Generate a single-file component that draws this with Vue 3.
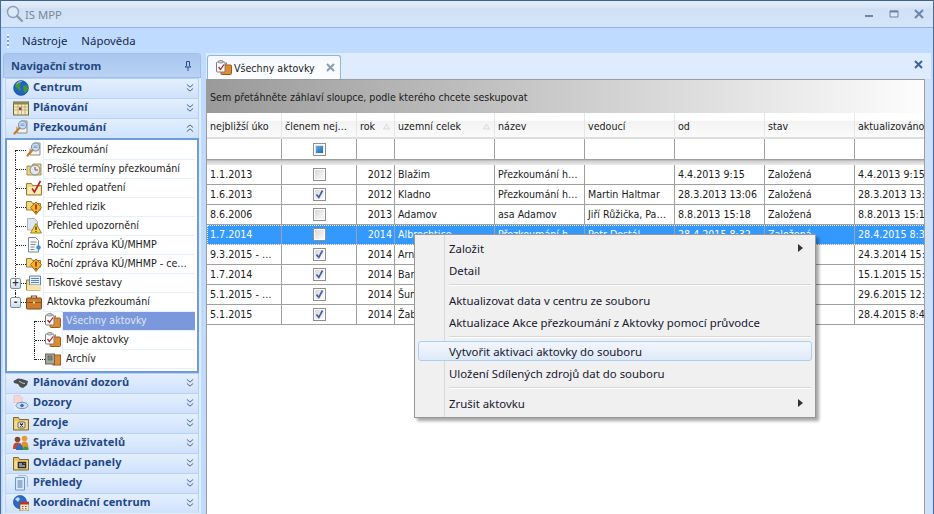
<script setup>
// section lists for the navigation panel
const topSections = [
  { label: 'Centrum', icon: 'globe' },
  { label: 'Plánování', icon: 'calendar' },
]
const bottomSections = [
  { label: 'Plánování dozorů', icon: 'hands' },
  { label: 'Dozory', icon: 'eyedoc' },
  { label: 'Zdroje', icon: 'folderx' },
  { label: 'Správa uživatelů', icon: 'users' },
  { label: 'Ovládací panely', icon: 'folderpanel' },
  { label: 'Přehledy', icon: 'doclist' },
  { label: 'Koordinační centrum', icon: 'globecal' },
]

const tree = [
  { label: 'Přezkoumání', icon: 'review', first: true },
  { label: 'Prošlé termíny přezkoumání', icon: 'overdue' },
  { label: 'Přehled opatření', icon: 'foldercheck' },
  { label: 'Přehled rizik', icon: 'folderwarn' },
  { label: 'Přehled upozornění', icon: 'docwarn' },
  { label: 'Roční zpráva KÚ/MHMP', icon: 'report' },
  { label: 'Roční zpráva KÚ/MHMP - ce…', icon: 'folderwarn' },
  { label: 'Tiskové sestavy', icon: 'folderdoc', expander: '+' },
  { label: 'Aktovka přezkoumání', icon: 'briefcase', expander: '-', last: true },
  { label: 'Všechny aktovky', icon: 'briefcheck', sub: true, selected: true, first: true },
  { label: 'Moje aktovky', icon: 'briefcheck', sub: true },
  { label: 'Archív', icon: 'archive', sub: true, last: true },
]

const columns = [
  { label: 'nejbližší úko' },
  { label: 'členem nej…' },
  { label: 'rok', sort: true },
  { label: 'uzemní celek', sort: true },
  { label: 'název' },
  { label: 'vedoucí' },
  { label: 'od' },
  { label: 'stav' },
  { label: 'aktualizováno' },
]

const rows = [
  { uko: '1.1.2013', member: false, year: 2012, area: 'Blažim', name: 'Přezkoumání h…', lead: '', from: '4.4.2013 9:15', state: 'Založená', updated: '4.4.2013 9:15' },
  { uko: '1.6.2013', member: true, year: 2012, area: 'Kladno', name: 'Přezkoumání h…', lead: 'Martin Haltmar', from: '28.3.2013 13:06', state: 'Založená', updated: '28.3.2013 13:06' },
  { uko: '8.6.2006', member: false, year: 2013, area: 'Adamov', name: 'asa Adamov', lead: 'Jiří Růžička, Pa…', from: '8.8.2013 15:18', state: 'Založená', updated: '8.8.2013 15:18' },
  { uko: '1.7.2014', member: false, year: 2014, area: 'Albrechtice', name: 'Přezkoumání h…', lead: 'Petr Dostál', from: '28.4.2015 8:32', state: 'Založená', updated: '28.4.2015 8:32', selected: true },
  { uko: '9.3.2015 - …', member: true, year: 2014, area: 'Arnoltice', name: '', lead: '', from: '', state: '', updated: '24.3.2014 15:10' },
  { uko: '1.7.2014', member: true, year: 2014, area: 'Bartošovice', name: '', lead: '', from: '', state: '', updated: '15.1.2015 15:12' },
  { uko: '5.1.2015 - …', member: true, year: 2014, area: 'Šumná', name: '', lead: '', from: '', state: '', updated: '29.6.2015 12:40' },
  { uko: '5.1.2015', member: true, year: 2014, area: 'Žabčice', name: '', lead: '', from: '', state: '', updated: '28.4.2015 8:40' },
]

const menuGroups = [
  [{ label: 'Založit', arrow: true }, { label: 'Detail' }],
  [{ label: 'Aktualizovat data v centru ze souboru' }, { label: 'Aktualizace Akce přezkoumání z Aktovky pomocí průvodce' }],
  [{ label: 'Vytvořit aktivaci aktovky do souboru', hover: true }, { label: 'Uložení Sdílených zdrojů dat do souboru' }],
  [{ label: 'Zrušit aktovku', arrow: true }],
]
</script>

<template>
  <svg class="sprite" aria-hidden="true">
    <symbol id="globe" viewBox="0 0 16 16">
      <circle cx="8" cy="8" r="7.4" fill="#1f63c4" stroke="#123f8a" stroke-width=".6" />
      <path d="M3 3.5 6.5 2 8 4 6.5 6.5 8 8.5 7 11 5 9 2 6.5zM10 6l4-1 1 4-2.5 4L10.500 11z" fill="#3f9a35" />
      <path d="M3.500 4a6 6 0 0 1 5-2.500" stroke="#bcdcff" fill="none" />
    </symbol>
    <symbol id="calendar" viewBox="0 0 16 16">
      <rect x=".5" y="2" width="15" height="13" fill="#f5e9bd" stroke="#6d6a3a" />
      <rect x=".5" y="2" width="15" height="2.500" fill="#8c8a4c" />
      <path d="M1 7h14M1 10h14M5 4v11M8.500 4v11M12 4v11" stroke="#a7a06a" stroke-width=".7" />
      <rect x="6" y="7.500" width="2.500" height="2.500" fill="#b02c4e" />
    </symbol>
    <symbol id="review" viewBox="0 0 16 16">
      <path d="M4 6.500V13h10V1H8" fill="#f6f3ea" stroke="#8b8b8b" />
      <circle cx="9.500" cy="5" r="4" fill="#c8def6" stroke="#7b93b5" stroke-width="1.100" />
      <path d="M7.500 4h4M7.500 5.500h4" stroke="#5f86bf" stroke-width=".7" />
      <path d="M6.500 8 1.500 13.500" stroke="#c77a2a" stroke-width="2.200" stroke-linecap="round" />
    </symbol>
    <symbol id="overdue" viewBox="0 0 16 16">
      <path d="M1 5h5l1-2h8v11H1z" fill="#efd47e" stroke="#97793a" stroke-width=".8" />
      <circle cx="9" cy="9" r="5" fill="#dfe9f0" stroke="#7c8a90" />
      <path d="M9 6v3h3" stroke="#b23b2b" fill="none" />
    </symbol>
    <symbol id="foldercheck" viewBox="0 0 16 16">
      <path d="M.5 3.500h5l1 2h9V15H.5z" fill="#f3d77f" stroke="#9a7c3a" />
      <path d="M1.500 7h13v7h-13z" fill="#fbeeb5" />
      <path d="M6 8.500l2.500 3.500L14.500 1" stroke="#b4212b" stroke-width="1.600" fill="none" />
    </symbol>
    <symbol id="folderwarn" viewBox="0 0 16 16">
      <path d="M.5 2.500h5l1 2h8V11H.5z" fill="#f3d77f" stroke="#9a7c3a" />
      <path d="M10 3 15.500 8.500 10 15.500 4.500 8.500z" fill="#f2b524" stroke="#a3691a" />
      <path d="M10 5.500v5M10 12v1.500" stroke="#a2211d" stroke-width="1.600" />
    </symbol>
    <symbol id="docwarn" viewBox="0 0 16 16">
      <path d="M1.500.5h7l3 3V12h-10z" fill="#dfe6ef" stroke="#a9b3c2" />
      <path d="M10 5.500 15.500 15h-11z" fill="#f5d23c" stroke="#9d8624" />
      <path d="M10 8.500v3.500M10 13v1" stroke="#222" stroke-width="1.200" />
    </symbol>
    <symbol id="report" viewBox="0 0 16 16">
      <path d="M2.500.5h7l3 3V15h-10z" fill="#f7f8fa" stroke="#7e8792" />
      <path d="M4.500 5h6M4.500 7.500h5M4.500 10h4M4.500 12.500h4" stroke="#7e8792" />
      <circle cx="12.500" cy="10.500" r="2.200" fill="#3a8fdc" />
    </symbol>
    <symbol id="folderdoc" viewBox="0 0 16 16">
      <path d="M.5 5h14v10H.5z" fill="#f0d585" stroke="#9a7c3a" />
      <path d="M3.500 1h11v9h-11z" fill="#e7f0fb" stroke="#5d84bc" />
      <path d="M5 3.500h8M5 5.500h8M5 7.500h8" stroke="#5d84bc" />
      <path d="M1 10h14v5H1z" fill="#f7e3a4" />
    </symbol>
    <symbol id="briefcase" viewBox="0 0 16 16">
      <path d="M5.500 4V2h5v2" fill="none" stroke="#7b4a1b" stroke-width="1.200" />
      <rect x=".5" y="4" width="15" height="11" rx="1" fill="#cf7d2e" stroke="#7b4a1b" />
      <path d="M1 8.500h14" stroke="#8b531e" />
      <rect x="7" y="7.500" width="2" height="2" fill="#f3d98b" />
    </symbol>
    <symbol id="briefcheck" viewBox="0 0 16 16">
      <rect x="5" y="5" width="10.500" height="9.500" rx="1" fill="#dc8d33" stroke="#9a5c1c" />
      <path d="M11 3h-1v2" stroke="#9a5c1c" fill="none" />
      <rect x=".5" y="2" width="8.500" height="10" rx="1" fill="#fff" stroke="#7b7b7b" />
      <rect x="2.500" y=".5" width="4.500" height="2.500" rx="1" fill="#c9c9c9" stroke="#7b7b7b" stroke-width=".7" />
      <path d="M2.500 7l2 2.500L8 4.500" stroke="#b4212b" stroke-width="1.300" fill="none" />
    </symbol>
    <symbol id="archive" viewBox="0 0 16 16">
      <rect x="8" y="4" width="7.500" height="10" fill="#dc8d33" stroke="#9a5c1c" />
      <rect x=".5" y="3" width="9" height="10" fill="#a9a9a0" stroke="#666" />
      <rect x="3" y="5" width="4" height="4" fill="#7c8f6a" stroke="#555" stroke-width=".6" />
    </symbol>
    <symbol id="hands" viewBox="0 0 16 16">
      <path d="M.5 6 5 3.500 9 4l6 2-1 4-4 3-3-1-2-3-4-1z" fill="#4c4f50" />
      <path d="M6 6l3 2 3 .5" stroke="#c5c7c8" fill="none" />
    </symbol>
    <symbol id="eyedoc" viewBox="0 0 16 16">
      <path d="M1 .5h6l2 2V8H1z" fill="#f6d5d2" stroke="#d8b9c8" stroke-width=".6" />
      <path d="M1 8V15h14V8z" fill="#e6eefb" />
      <ellipse cx="9" cy="10.500" rx="6" ry="3.200" fill="#cfe0f6" stroke="#6f93c6" />
      <circle cx="9" cy="10.500" r="1.800" fill="#3d6fb2" />
    </symbol>
    <symbol id="folderx" viewBox="0 0 16 16">
      <path d="M.5 2.500h5l1 2h9V15H.5z" fill="#e7c45f" stroke="#7f6a2d" />
      <path d="M1.500 6h13v8h-13z" fill="#f4dd8f" />
      <rect x="5" y="7" width="7" height="6" rx="1" fill="#efefe8" stroke="#444" stroke-width=".8" />
      <path d="M7 8.500l3 3M10 8.500l-3 3" stroke="#222" stroke-width="1.100" />
    </symbol>
    <symbol id="users" viewBox="0 0 16 16">
      <circle cx="4.500" cy="4.500" r="2.800" fill="#7d4a2a" />
      <circle cx="11.500" cy="3.500" r="2.800" fill="#e79a3a" />
      <path d="M0 14c0-6 2-6.500 4.500-6.500S9 8 9 14z" fill="#c8452b" />
      <path d="M8 14c0-7 1.500-7.500 3.500-7.500s4 .5 4 7.500z" fill="#e78e2c" />
      <path d="M3 15c0-5 1.500-5.500 3.500-5.500S10 10 10 15z" fill="#2d6cb8" />
      <path d="M10 15c0-3 1-3.500 2.500-3.500s3 .5 3 3.500z" fill="#3c9a3b" />
    </symbol>
    <symbol id="folderpanel" viewBox="0 0 16 16">
      <path d="M.5 2.500h5l1 2h9V15H.5z" fill="#e7c45f" stroke="#7f6a2d" />
      <path d="M1.500 6h13v8h-13z" fill="#f4dd8f" />
      <rect x="5" y="7" width="8" height="6" fill="#30343a" stroke="#222" stroke-width=".6" />
      <path d="M6 9h3M6 11h6" stroke="#e9e9e9" />
      <path d="M10.500 8.500h2" stroke="#d83b30" />
    </symbol>
    <symbol id="doclist" viewBox="0 0 16 16">
      <path d="M2.500 2.500h9V15h-9z" fill="#dbe9fa" stroke="#6f94c6" />
      <path d="M5 .5h8l1.500 1.500V12" fill="none" stroke="#9db9de" />
      <path d="M4.500 6h5M4.500 8h5M4.500 10h5M4.500 12h5" stroke="#4d79b5" />
    </symbol>
    <symbol id="globecal" viewBox="0 0 16 16">
      <circle cx="7" cy="7" r="6.600" fill="#2e69c7" stroke="#1d4a94" stroke-width=".6" />
      <path d="M2 4l3-2 2 2-2 3z" fill="#bcdcff" />
      <rect x="7" y="7" width="9" height="9" fill="#f6e7c8" stroke="#7c5a2b" stroke-width=".7" />
      <rect x="7" y="7" width="9" height="2.500" fill="#bd3328" />
      <path d="M9 11.500h1.500M12 11.500h1.500M9 13.800h1.500M12 13.800h1.500" stroke="#7c5a2b" />
    </symbol>
  </svg>

  <div class="window">
    <header class="titlebar">
      <svg class="app-icon" viewBox="0 0 18 18">
        <circle cx="7" cy="7" r="5.500" fill="#dceaf8" stroke="#8a9fb8" stroke-width="1.400" />
        <path d="M11 11l5 5" stroke="#8d9aa8" stroke-width="2.400" stroke-linecap="round" />
      </svg>
      <span class="app-title">IS MPP</span>
      <div class="win-buttons">
        <svg viewBox="0 0 12 12"><path d="M2 8h8" stroke="#6b86a8" stroke-width="2" /></svg>
        <svg viewBox="0 0 12 12"><path d="M2 3h8v6H2z" fill="#dbe8f8" stroke="#6b86a8" /><path d="M2 3.500h8" stroke="#6b86a8" stroke-width="2" /></svg>
        <svg viewBox="0 0 12 12"><path d="M2 2l8 8M10 2l-8 8" stroke="#6b86a8" stroke-width="2" /></svg>
      </div>
    </header>

    <nav class="menubar">
      <span class="grip"></span>
      <span class="menu-item">Nástroje</span>
      <span class="menu-item">Nápověda</span>
    </nav>

    <div class="workspace">
      <aside class="nav-panel">
        <div class="nav-head">
          <span>Navigační strom</span>
          <svg class="pin" viewBox="0 0 10 12"><path d="M3.500 1.500h3v4.500l1.500 1H2l1.500-1zM5 7v4" fill="none" stroke="#2b4f8a" /></svg>
        </div>
        <div class="sections">
          <div v-for="s in topSections" :key="s.label" class="section">
            <svg class="sec-icon"><use :href="'#' + s.icon" /></svg>
            <span class="sec-label">{{ s.label }}</span>
            <svg class="chev" viewBox="0 0 9 10"><path d="M1 1l3.500 3L8 1M1 5.500l3.500 3 3.500-3" fill="none" stroke="#44628c" stroke-width="1.100" /></svg>
          </div>
          <div class="section">
            <svg class="sec-icon"><use href="#review" /></svg>
            <span class="sec-label">Přezkoumání</span>
            <svg class="chev" viewBox="0 0 9 10"><path d="M1 4.500L4.500 1.500 8 4.500M1 9l3.500-3L8 9" fill="none" stroke="#44628c" stroke-width="1.100" /></svg>
          </div>
          <div class="tree">
            <div v-for="item in tree" :key="item.label" class="tree-row" :class="{ 'is-sub': item.sub }">
              <span class="conn" :class="{ 'conn-first': item.first, 'conn-last': item.last }">
                <span v-if="item.expander" class="expander">{{ item.expander }}</span>
              </span>
              <svg class="tree-icon"><use :href="'#' + item.icon" /></svg>
              <span class="tree-label" :class="{ selected: item.selected }">{{ item.label }}</span>
            </div>
          </div>
          <div v-for="s in bottomSections" :key="s.label" class="section">
            <svg class="sec-icon"><use :href="'#' + s.icon" /></svg>
            <span class="sec-label">{{ s.label }}</span>
            <svg class="chev" viewBox="0 0 9 10"><path d="M1 1l3.500 3L8 1M1 5.500l3.500 3 3.500-3" fill="none" stroke="#44628c" stroke-width="1.100" /></svg>
          </div>
        </div>
      </aside>

      <main class="content">
        <div class="tabstrip">
          <div class="tab">
            <svg class="tab-icon"><use href="#briefcheck" /></svg>
            <span>Všechny aktovky</span>
            <svg class="tab-close" viewBox="0 0 9 9"><path d="M1 1l7 7M8 1L1 8" stroke="#8c9ab0" stroke-width="2" /></svg>
          </div>
          <svg class="strip-close" viewBox="0 0 9 9"><path d="M1 1l7 7M8 1L1 8" stroke="#3f669c" stroke-width="2" /></svg>
        </div>

        <div class="grid-frame">
          <div class="grid">
            <div class="group-panel">Sem přetáhněte záhlaví sloupce, podle kterého chcete seskupovat</div>
            <div class="grid-row head-row">
              <div v-for="c in columns" :key="c.label" class="head-cell">
                <span>{{ c.label }}</span>
                <svg v-if="c.sort" class="sort" viewBox="0 0 7 7"><path d="M3.500 1 6.500 6h-6z" fill="#f2f2f2" stroke="#c9c9c9" stroke-width=".6" /></svg>
              </div>
            </div>
            <div class="grid-row filter-row">
              <div v-for="(c, i) in columns" :key="c.label" class="cell center">
                <span v-if="i === 1" class="check filter-check"><i></i></span>
              </div>
            </div>
            <div class="separator"></div>
            <div v-for="r in rows" :key="r.uko + r.area" class="grid-row data-row" :class="{ selected: r.selected }">
              <div class="cell">{{ r.uko }}</div>
              <div class="cell center">
                <span class="check">
                  <svg v-if="r.member" viewBox="0 0 11 11"><path d="M2.500 5.500l2.300 3L8.500 1.500" fill="none" stroke="#4a63a8" stroke-width="1.700" /></svg>
                </span>
              </div>
              <div class="cell right">{{ r.year }}</div>
              <div class="cell">{{ r.area }}</div>
              <div class="cell">{{ r.name }}</div>
              <div class="cell">{{ r.lead }}</div>
              <div class="cell">{{ r.from }}</div>
              <div class="cell">{{ r.state }}</div>
              <div class="cell">{{ r.updated }}</div>
            </div>
          </div>
        </div>
      </main>
    </div>

    <div class="context-menu">
      <template v-for="(group, g) in menuGroups" :key="g">
        <div v-if="g > 0" class="menu-sep"></div>
        <div v-for="m in group" :key="m.label" class="ctx-item" :class="{ hover: m.hover }">
          <span>{{ m.label }}</span>
          <svg v-if="m.arrow" class="ctx-arrow" viewBox="0 0 5 8"><path d="M0 0l5 4-5 4z" fill="#333" /></svg>
        </div>
      </template>
    </div>
  </div>
</template>

<style>
html, body { margin: 0; background: #bfdbff; }
</style>

<style scoped>
.sprite { display: none; }

.window {
  position: relative;
  width: 934px;
  height: 514px;
  box-sizing: border-box;
  overflow: hidden;
  background: #bfdbff;
  border-left: 1px solid #4a6d9c;
  border-right: 1px solid #4a6d9c;
  font-family: "DejaVu Sans Condensed", "Noto Sans", sans-serif;
  font-size: 10.600px;
  color: #1b1b1b;
}

.titlebar {
  height: 28px;
  box-sizing: border-box;
  border-top: 1px solid #3e6189;
  display: flex;
  align-items: center;
  padding: 0 8px 0 5px;
  background: linear-gradient(#e3eefc 0, #d8e6f8 25%, #cfe0f5 30%, #d6e5f8 100%);
  border-bottom: 1px solid #8db6e6;
}
.app-icon { width: 18px; height: 18px; margin-right: 1px; margin-top: -1px; }
.app-title { font-family: "Noto Sans", sans-serif; font-size: 11.300px; color: #7a8697; }
.win-buttons { margin-left: auto; display: flex; gap: 13px; }
.win-buttons svg { width: 12px; height: 12px; }

.menubar {
  height: 25px;
  display: flex;
  align-items: center;
  padding-left: 6px;
  background: #bfdbff;
  box-sizing: border-box;
  font-family: "Noto Sans", sans-serif;
}
.grip {
  width: 2px;
  height: 14px;
  margin-right: 13px;
  background: repeating-linear-gradient(#fff 0 2px, #5f8ac4 2px 4px);
  opacity: .7;
}
.menu-item { font-size: 11.400px; margin-right: 14px; color: #15294a; }

.workspace {
  display: flex;
  height: 461px;
}

.nav-panel {
  width: 198px;
  margin: 0 0 0 2px;
  flex: none;
  border-radius: 3px 3px 0 0;
  background: #e1edfd;
  overflow: hidden;
}
.nav-head {
  height: 25px;
  box-sizing: border-box;
  display: flex;
  align-items: center;
  justify-content: space-between;
  padding: 0 7px 0 7px;
  background: linear-gradient(#a9c6ee, #b9d2f4);
  border: 1px solid #a0c0ea;
  font-family: "Noto Sans", sans-serif;
  font-size: 11px;
  font-weight: 700;
  color: #21487f;
}
.pin { width: 10px; height: 12px; }

.sections {
  margin: 0 2px;
  background: #a9c9f2;
}
.section {
  height: 20px;
  box-sizing: border-box;
  display: flex;
  align-items: center;
  padding: 0 5px 1px 7px;
  background: linear-gradient(#e4effe, #cfe2fc);
  border: 1px solid #b6d2f8;
  border-width: 1px 1px 0 1px;
}
.sec-icon { width: 16px; height: 16px; margin-right: 4px; flex: none; }
.sec-label {
  font-family: "Noto Sans", sans-serif;
  font-size: 11px;
  line-height: 14px;
  margin-top: -2px;
  font-weight: 700;
  color: #1f4787;
  letter-spacing: .1px;
}
.chev { width: 8px; height: 10px; margin-left: auto; margin-right: -1px; }

.tree {
  background: #fff;
  border: 2px solid #6e9cdb;
  padding: 1px 0 3px;
  height: 235px;
  box-sizing: border-box;
}
.tree-row {
  display: flex;
  height: 19px;
  padding-left: 4px;
  align-items: stretch;
}
.tree-row.is-sub { padding-left: 23px; }

.conn {
  position: relative;
  width: 15px;
  flex: none;
}
.conn::before {
  content: "";
  position: absolute;
  left: 4px;
  top: 0;
  bottom: 0;
  border-left: 1px dotted #222;
}
.conn::after {
  content: "";
  position: absolute;
  left: 5px;
  right: 0;
  top: 9px;
  border-top: 1px dotted #222;
}
.conn-first::before { top: 9px; }
.conn-last::before { bottom: 9px; }

.expander {
  position: absolute;
  z-index: 1;
  left: -1px;
  top: 4px;
  width: 9px;
  height: 9px;
  line-height: 8px;
  border: 1px solid #7c8fa8;
  border-radius: 2px;
  background: linear-gradient(#fff, #cfdcec);
  text-align: center;
  font-size: 10px;
  font-weight: 700;
  color: #333;
}

.tree-icon { width: 16px; height: 16px; margin: 1px 1px 0 0; flex: none; }
.tree-label {
  flex: 1;
  min-width: 0;
  padding-left: 3px;
  margin-right: 2px;
  line-height: 16px;
  border-left: 1px solid #e6effc;
  border-bottom: 1px solid #e6effc;
  white-space: nowrap;
  overflow: hidden;
}
.tree-label.selected {
  background: #7b98dc;
  color: #dfe6f8;
}

.content {
  flex: 1;
  min-width: 0;
  margin: 0 1px 0 5px;
}
.tabstrip {
  height: 26px;
  box-sizing: border-box;
  display: flex;
  align-items: flex-end;
  background: #dfecff;
  position: relative;
  padding-left: 1px;
  margin-right: 1px;
}
.tab {
  width: 134px;
  height: 24px;
  box-sizing: border-box;
  display: flex;
  align-items: center;
  padding: 0 0 0 8px;
  background: linear-gradient(#f4f8fe, #fbfdff);
  border: 1px solid #8db6e6;
  border-bottom: 0;
  border-radius: 3px 3px 0 0;
  white-space: nowrap;
}
.tab-icon { width: 16px; height: 16px; margin-right: 2px; flex: none; }
.tab-close { width: 9px; height: 9px; margin-left: auto; margin-right: 5px; }
.strip-close {
  position: absolute;
  right: 8px;
  top: 7px;
  width: 9px;
  height: 9px;
}

.grid-frame {
  height: 435px;
  box-sizing: border-box;
  background: linear-gradient(90deg, #cfe1f8, #a9c7ee 60%, #cfe1f8);
}
.grid {
  width: 719px;
  height: 100%;
  overflow: hidden;
  background: #fff;
  border: 1px solid #9c9c9c;
  border-bottom: 0;
  box-sizing: border-box;
}

.group-panel {
  height: 33px;
  line-height: 34px;
  padding-left: 3px;
  background: linear-gradient(90deg, #9a9a9a, #fdfdfd);
  white-space: nowrap;
}

.grid-row {
  display: grid;
  grid-template-columns: 75px 75px 38px 100px 90px 90px 90px 90px 90px;
  width: 738px;
}
.head-row { height: 26px; }
.head-cell {
  display: flex;
  align-items: center;
  box-sizing: border-box;
  padding: 2px 0 0 3px;
  background: linear-gradient(#fff 0, #fff 30%, #f3f3f3 34%, #fbfbfb 100%);
  border-right: 1px solid #e6e6e6;
  border-bottom: 2px solid #dcdcdc;
  white-space: nowrap;
  overflow: hidden;
}
.sort { width: 7px; height: 7px; margin-left: auto; margin-right: 4px; }

.cell {
  box-sizing: border-box;
  padding: 0 2px 0 3px;
  border-right: 1px solid #a0a0a0;
  border-bottom: 1px solid #a0a0a0;
  line-height: 19px;
  white-space: nowrap;
  overflow: hidden;
}
.cell.center { display: flex; align-items: center; justify-content: center; }
.cell.right { text-align: right; }
.filter-row { height: 20px; }
.filter-row .cell { border-bottom: 0; }
.data-row { height: 20px; }
.data-row.selected {
  background: #3399ff;
  color: #fff;
  outline: 1px dotted #e8f3ff;
  outline-offset: -1px;
}

.check {
  width: 11px;
  height: 11px;
  display: block;
  border: 1px solid #8f8f8f;
  background: linear-gradient(135deg, #d4d4d4, #fff);
  box-shadow: inset 0 0 0 1px #fff;
}
.check svg { display: block; width: 11px; height: 11px; }
.filter-check i {
  display: block;
  margin: 2px;
  width: 7px;
  height: 7px;
  background: linear-gradient(135deg, #5fb0e8, #1e68b4);
}

.separator {
  height: 6px;
  background: linear-gradient(#8f8f8f, #d0d0d0 35%, #ececec);
}

.context-menu {
  position: absolute;
  left: 413px;
  top: 234px;
  width: 402px;
  height: 184px;
  box-sizing: border-box;
  padding: 2px;
  background: linear-gradient(90deg, #f0f0f0 0 29px, #d9d9d9 29px 30px, #f0f0f0 30px);
  border: 1px solid #979797;
  box-shadow: 3px 3px 3px rgba(0, 0, 0, .35);
  font-family: "Noto Sans", sans-serif;
  font-size: 11.400px;
}
.ctx-item {
  height: 22px;
  box-sizing: border-box;
  display: flex;
  align-items: center;
  padding-left: 32px;
  padding-right: 10px;
  color: #181830;
  white-space: nowrap;
}
.ctx-item.hover {
  height: 20px;
  margin: 1px;
  padding-left: 30px;
  border: 1px solid #a8d0f4;
  border-radius: 3px;
  background: linear-gradient(#f2f6fc, #dfeaf8);
}
.ctx-arrow { width: 5px; height: 8px; margin-left: auto; }
.menu-sep {
  height: 1px;
  margin: 3px 2px 4px 32px;
  background: #d7d7d7;
  box-shadow: 0 1px 0 #fff;
}
</style>
